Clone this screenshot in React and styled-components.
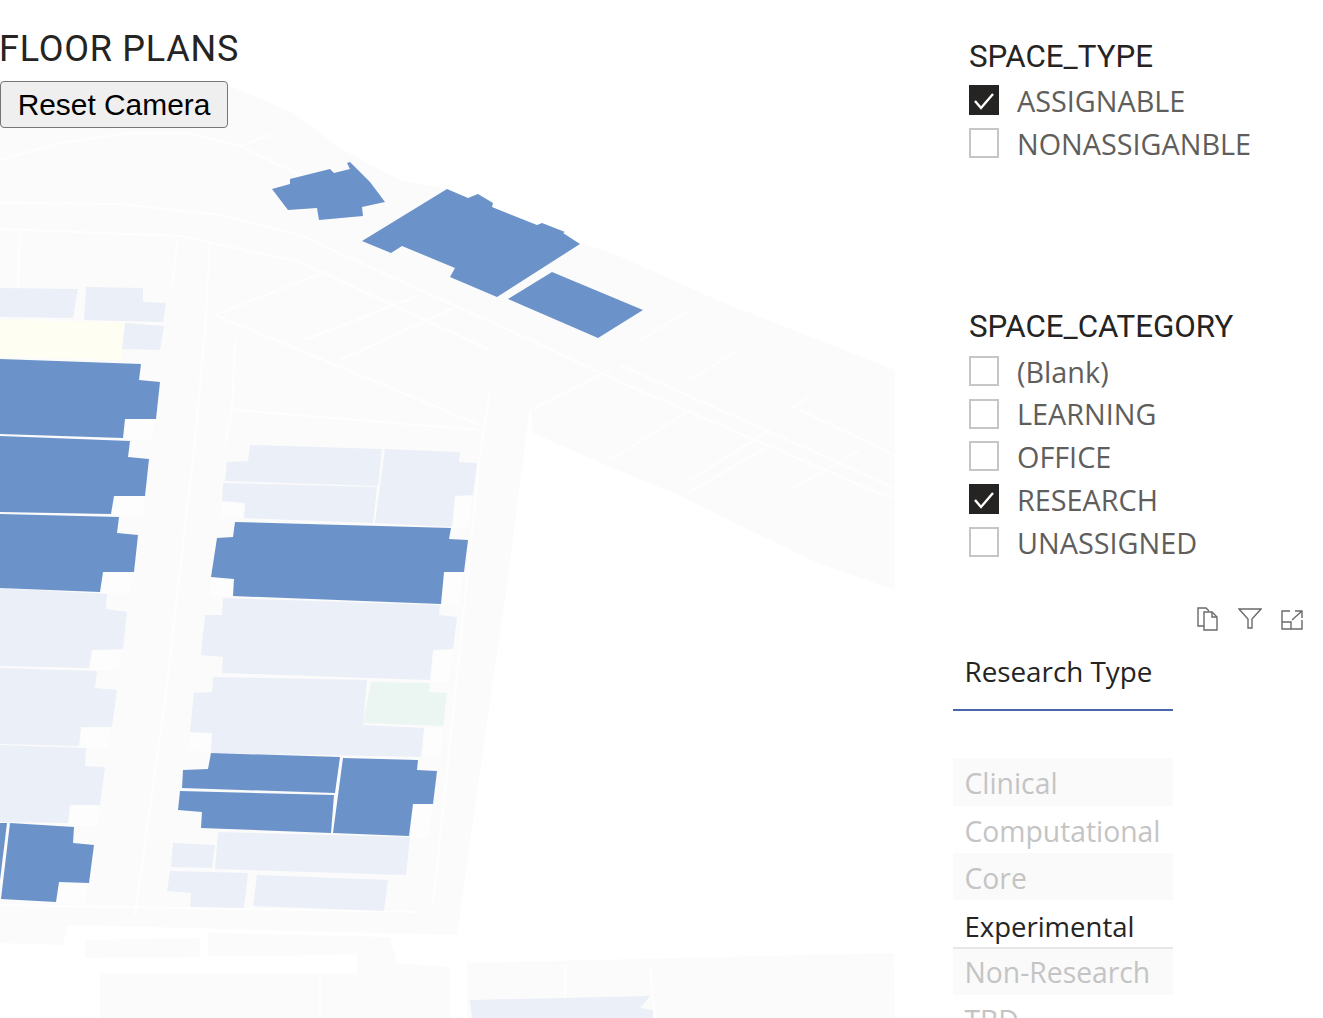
import styled, {createGlobalStyle} from "styled-components";

const GlobalStyle = createGlobalStyle`
  html, body {
    margin: 0;
    padding: 0;
    background: #fff;
    overflow: hidden;
  }
`

const Page = styled.div`
  display: grid;
  grid-template-columns: 895px 428px;
  width: 1323px;
  height: 1018px;
  overflow: hidden;
`

const Stage = styled.div`
  position: relative;
  height: 1018px;
  overflow: hidden;
`

const PlanSvg = styled.svg`
  display: block;
`

const StageHeader = styled.div`
  position: absolute;
  top: 26px;
  left: 0;
  display: flex;
  flex-direction: column;
  align-items: flex-start;
`

const PlanTitle = styled.h1`
  margin: 0;
  font: 400 36px/45px Roboto, "Liberation Sans", sans-serif;
  color: #252423;
  letter-spacing: 0.75px;
  position: relative;
  left: -1px;
  top: 1px;
`

const ResetButton = styled.button`
  box-sizing: border-box;
  width: 228px;
  height: 47px;
  margin-top: 10px;
  padding: 0;
  border: 1px solid #767676;
  border-radius: 4px;
  background: #efefef;
  color: #000;
  font: 400 29.9px "Liberation Sans", Arial, sans-serif;
`

const Side = styled.div`
  display: flex;
  flex-direction: column;
  padding-left: 58px;
  font-family: "Open Sans", "Noto Sans", sans-serif;
`

const CheckSlicer = styled.section`
  margin: ${p => p.$top}px 0 0 16px;
`

const SlicerTitle = styled.div`
  height: 42px;
  margin-bottom: ${p => p.$gap}px;
  font: 400 31.3px/42px Roboto, sans-serif;
  color: #252423;
`

const CheckRow = styled.div`
  display: flex;
  align-items: center;
  gap: 18px;
  height: 42.75px;
  font-size: 28.8px;
  line-height: 42.75px;
  color: #605e5c;
`

const CheckLabel = styled.span`
  position: relative;
  top: 1px;
`

const CheckBox = styled.span`
  box-sizing: border-box;
  display: flex;
  align-items: center;
  justify-content: center;
  width: 30px;
  height: 30px;
  border: 2px solid ${p => p.$checked ? "#252423" : "#c8c6c4"};
  background: ${p => p.$checked ? "#252423" : "#fff"};
`

const Toolbar = styled.div`
  display: flex;
  justify-content: flex-end;
  gap: 18px;
  width: 351px;
  margin-top: 43px;
  height: 26px;
  color: #6b6a69;
`

const ResearchSlicer = styled.section`
  width: 220px;
  margin-top: 21px;
`

const ResearchHeader = styled.div`
  box-sizing: border-box;
  height: 58px;
  padding-left: 11.5px;
  border-bottom: 2px solid #4a66a8;
  font-size: 27.8px;
  line-height: 36px;
  color: #252423;
`

const ItemList = styled.div`
  margin-top: 47px;
`

const Item = styled.div`
  box-sizing: border-box;
  height: ${p => p.$height || 47.3}px;
  padding-left: 11.5px;
  font-size: ${p => p.$active ? 27.5 : 28.3}px;
  line-height: ${p => p.$lineHeight || 50}px;
  color: ${p => p.$active ? "#252423" : "#c4c4c4"};
  background: ${p => p.$shaded ? "#fafafa" : "#fff"};
  border-bottom: ${p => p.$active ? "2px solid #e6e6e6" : "0"};
`

// plan shapes traced from the floor plan, in page pixels
const building = "0,128 60,128 150,118 150,87 233,87 293,113 343,150 400,180 447,189 580,243 617,255 717,300 895,370 895,590 817,563 683,497 610,467 533,433 530,407 520,483 505,600 493,680 457,935 67,925 63,945 0,943"

const lowerBlocks = [
    "85,940 200,938 200,957 85,958",
    "208,933 390,937 397,963 450,967 450,1018 100,1018 100,973 357,973 357,955 208,956",
    "467,963 894,953 895,1018 467,1018"
]

const blueRooms = [
    "272,189 290,184 290,179 330,169 334,173 350,169 347,163 350,162 370,182 385,202 362,207 363,216 319,220 317,208 288,210",
    "362,241 447,189 468,198 478,194 493,203 492,207 537,225 542,223 565,232 563,233 580,244 497,297 450,277 455,268 402,246 391,253",
    "552,272 643,310 598,338 508,299",
    "0,359 141,364 139,380 160,382 156,419 125,419 123,438 0,434",
    "0,436 130,441 128,457 149,459 145,496 114,496 111,514 0,512",
    "0,514 119,517 117,533 138,535 134,572 103,572 100,592 0,588",
    "235,522 451,528 449,539 468,540 464,572 444,572 441,604 233,596 234,579 211,577 217,538 233,537",
    "211,753 340,757 335,793 182,788 183,770 208,769",
    "180,791 334,795 331,833 201,828 202,812 178,810",
    "343,758 418,760 417,770 437,771 433,804 413,804 409,836 333,833",
    "10,823 74,827 73,843 94,845 89,883 59,882 56,902 1,899",
    "0,823 7,823 0,880"
]

const lightRooms = [
    "0,288 78,289 73,318 0,317",
    "86,287 143,288 143,302 166,303 163,322 84,320",
    "125,323 164,326 160,350 122,349",
    "250,445 382,449 378,486 225,481 227,462 248,461",
    "223,483 377,487 373,523 244,518 245,503 222,501",
    "385,449 460,452 459,462 477,463 473,495 455,496 452,527 375,523",
    "223,598 440,605 439,615 457,617 453,649 433,650 430,680 222,673 223,657 201,655 205,615 222,615",
    "213,677 367,680 363,725 424,728 421,757 211,753 212,733 190,732 194,693 212,692",
    "0,588 107,594 106,609 127,612 123,649 92,650 89,668 0,666",
    "0,668 97,671 95,688 117,690 112,727 81,727 79,746 0,744",
    "0,745 86,748 85,766 105,767 100,805 70,805 68,823 0,822",
    "218,832 410,837 406,875 215,869",
    "173,843 215,845 212,868 171,867",
    "170,871 248,873 244,908 190,907 191,893 167,891",
    "257,875 388,880 384,911 253,906",
    "470,1000 650,996 640,1008 653,1010 653,1018 472,1018"
]

// the paler pockets beside the stepped room ends
const notches = [
    "126,420 155,421 152,440 124,439",
    "115,497 145,497 142,516 112,515",
    "104,573 133,573 130,594 101,593",
    "93,651 122,651 119,670 90,670",
    "82,728 110,728 108,748 80,748",
    "71,806 100,806 98,826 69,826",
    "60,883 88,884 85,903 57,903",
    "456,497 472,497 469,528 453,528",
    "445,573 463,573 460,606 442,605",
    "434,651 452,651 449,682 431,682",
    "425,729 443,729 441,757 423,757",
    "414,805 432,805 429,838 410,838",
    "212,579 233,580 232,597 210,595",
    "222,502 244,504 243,518 220,517",
    "191,733 211,734 210,752 188,750"
]

const whiteWalls = [
    "0,160 60,143 130,133 187,133 240,146 300,175",
    "0,203 120,204 220,215 300,235 420,290 520,335 620,382 895,500",
    "20,230 18,288",
    "210,240 205,330 195,440 165,700 135,915",
    "178,238 172,288",
    "0,229 180,236 300,262 490,350",
    "215,315 330,270",
    "215,315 480,425",
    "305,340 420,295",
    "340,360 460,305",
    "240,146 270,135",
    "690,310 640,340",
    "735,352 690,380",
    "810,395 790,410",
    "860,450 790,490",
    "770,430 690,480",
    "610,370 530,410",
    "690,410 610,460",
    "770,445 685,495",
    "895,455 800,410",
    "895,488 620,365",
    "490,390 480,455 433,905",
    "225,445 232,410 235,340",
    "235,410 480,430",
    "0,905 420,912",
    "320,973 320,1018",
    "565,965 565,1000",
    "650,965 655,1018"
]

const Plan = () => (
    <PlanSvg width="895" height="1018" viewBox="0 0 895 1018" aria-hidden="true">
        <polygon points={building} fill="#fbfbfb"/>
        {lowerBlocks.map(points => (
            <polygon key={points} points={points} fill="#fbfbfb"/>
        ))}
        {whiteWalls.map(points => (
            <polyline key={points} points={points} fill="none" stroke="#fefefe" strokeWidth="2"/>
        ))}
        {notches.map(points => (
            <polygon key={points} points={points} fill="#fdfdfd"/>
        ))}
        <polygon points="0,320 125,322 121,360 0,357" fill="#fffef3"/>
        {lightRooms.map(points => (
            <polygon key={points} points={points} fill="#ebeff8"/>
        ))}
        <polygon points="371,682 430,683 429,692 447,693 443,726 363,723" fill="#ebf6f3"/>
        {blueRooms.map(points => (
            <polygon key={points} points={points} fill="#6b92c9"/>
        ))}
    </PlanSvg>
)

const CopyIcon = () => (
    <svg width="24" height="26" viewBox="0 0 24 26" fill="none" stroke="currentColor" strokeWidth="1.4">
        <path d="M8 20H2V2h8l3 3"/>
        <path d="M8 6h8l5 5v13H8z"/>
        <path d="M16 6v5h5"/>
    </svg>
)

const FilterIcon = () => (
    <svg width="24" height="26" viewBox="0 0 24 26" fill="none" stroke="currentColor" strokeWidth="1.4">
        <path d="M1 3h22l-9 10v9h-4v-9z"/>
    </svg>
)

const FocusIcon = () => (
    <svg width="24" height="26" viewBox="0 0 24 26" fill="none" stroke="currentColor" strokeWidth="1.4">
        <path d="M10 5H2v18h20v-9"/>
        <path d="M2 16h9v7"/>
        <path d="M12 14l10-9M15 5h7v7"/>
    </svg>
)

const CheckMark = () => (
    <svg width="22" height="22" viewBox="0 0 22 22" fill="none" stroke="#fff" strokeWidth="2.4">
        <path d="M2 12l6 7L20 5"/>
    </svg>
)

const Check = ({label, checked}) => (
    <CheckRow>
        <CheckBox $checked={checked}>{checked && <CheckMark/>}</CheckBox>
        <CheckLabel>{label}</CheckLabel>
    </CheckRow>
)

const App = () => {
    return <Page>
        <GlobalStyle/>
        <Stage>
            <Plan/>
            <StageHeader>
                <PlanTitle>FLOOR PLANS</PlanTitle>
                <ResetButton>Reset Camera</ResetButton>
            </StageHeader>
        </Stage>
        <Side>
            <CheckSlicer $top={36}>
                <SlicerTitle $gap={1}>SPACE_TYPE</SlicerTitle>
                <Check label="ASSIGNABLE" checked/>
                <Check label="NONASSIGANBLE"/>
            </CheckSlicer>
            <CheckSlicer $top={141}>
                <SlicerTitle $gap={2}>SPACE_CATEGORY</SlicerTitle>
                <Check label="(Blank)"/>
                <Check label="LEARNING"/>
                <Check label="OFFICE"/>
                <Check label="RESEARCH" checked/>
                <Check label="UNASSIGNED"/>
            </CheckSlicer>
            <Toolbar>
                <CopyIcon/>
                <FilterIcon/>
                <FocusIcon/>
            </Toolbar>
            <ResearchSlicer>
                <ResearchHeader>Research Type</ResearchHeader>
                <ItemList>
                    <Item $shaded>Clinical</Item>
                    <Item>Computational</Item>
                    <Item $shaded>Core</Item>
                    <Item $active $height={49} $lineHeight={54}>Experimental</Item>
                    <Item $shaded $height={46} $lineHeight={46}>Non-Research</Item>
                    <Item>TBD</Item>
                </ItemList>
            </ResearchSlicer>
        </Side>
    </Page>
}

export default App
